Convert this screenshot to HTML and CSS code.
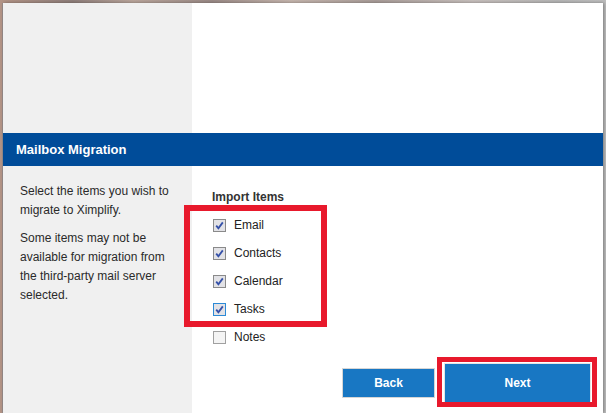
FILE: index.html
```html
<!DOCTYPE html>
<html>
<head>
<meta charset="utf-8">
<link rel="stylesheet" href="styles.css">
</head>
<body>
<div class="dialog">
  <div class="side-top"></div>
  <div class="main-top"></div>
  <div class="header">Mailbox Migration</div>
  <div class="side">
    <p>Select the items you wish to migrate to Ximplify.</p>
    <p>Some items may not be available for migration from the third-party mail server selected.</p>
  </div>
  <div class="main">
    <div class="heading">Import Items</div>
    <ul class="items">
      <li class="item"><span class="box checked"><svg viewBox="0 0 11 11" width="11" height="11"><path d="M2.2 5.6 L4.4 8.2 L8.8 2.4" /></svg></span>Email</li>
      <li class="item"><span class="box checked"><svg viewBox="0 0 11 11" width="11" height="11"><path d="M2.2 5.6 L4.4 8.2 L8.8 2.4" /></svg></span>Contacts</li>
      <li class="item"><span class="box checked"><svg viewBox="0 0 11 11" width="11" height="11"><path d="M2.2 5.6 L4.4 8.2 L8.8 2.4" /></svg></span>Calendar</li>
      <li class="item"><span class="box checked focus"><svg viewBox="0 0 11 11" width="11" height="11"><path d="M2.2 5.6 L4.4 8.2 L8.8 2.4" /></svg></span>Tasks</li>
      <li class="item"><span class="box"></span>Notes</li>
    </ul>
    <div class="actions">
      <button class="btn back">Back</button>
      <button class="btn next">Next</button>
    </div>
  </div>
  <div class="mark mark-items"></div>
  <div class="mark mark-next"></div>
</div>
</body>
</html>
```

FILE: styles.css
```css
html, body {
  margin: 0;
  padding: 0;
  width: 606px;
  height: 413px;
  overflow: hidden;
}
body {
  font-family: "Liberation Sans", Arial, sans-serif;
  background:
    linear-gradient(to right, #b39486 0%, #8e7e7a 12%, #b8a49a 22%, #9a8a86 35%, #c4b4ac 48%, #a89c98 62%, #c6bebb 78%, #b4b4b4 92%, #bdbdbd 100%);
}
.dialog {
  position: relative;
  margin: 3px 3px 0 3px;
  width: 600px;
  height: 410px;
  display: grid;
  grid-template-columns: 189px 1fr;
  grid-template-rows: 130px 33px 1fr;
  background: #fff;
  box-shadow: 1px 0 3px rgba(0, 0, 0, 0.35), -1px 0 0 #9a8e8c;
}
.side-top {
  background: #f0f0f0;
}
.main-top {
  background: #fff;
}
.header {
  grid-column: 1 / 3;
  background: #004c99;
  color: #fff;
  font-weight: bold;
  font-size: 13px;
  line-height: 33px;
  padding-left: 13px;
}
.side {
  background: #f0f0f0;
  padding: 16px 12px 0 17px;
  font-size: 12px;
  line-height: 19px;
  color: #2a2a2a;
}
.side p {
  margin: 0 0 9px 0;
}
.main {
  display: flex;
  flex-direction: column;
  padding: 23px 0 0 20px;
}
.heading {
  font-size: 12px;
  font-weight: bold;
  line-height: 16px;
  color: #333;
  margin-bottom: 6px;
}
.items {
  list-style: none;
  margin: 0;
  padding: 0 0 0 1px;
}
.item {
  height: 28px;
  display: flex;
  align-items: center;
  gap: 8px;
  font-size: 12px;
  color: #222;
}
.box {
  box-sizing: border-box;
  width: 13px;
  height: 13px;
  border: 1px solid #a0a0a0;
  background: #f4f4f4;
  display: flex;
  align-items: center;
  justify-content: center;
}
.box.checked {
  border-color: #8a8a8a;
  background: #e2e2e6;
}
.box.focus {
  border-color: #2c8ad6;
}
.box svg path {
  fill: none;
  stroke: #3450a8;
  stroke-width: 1.8;
}
.actions {
  margin-top: auto;
  display: flex;
  justify-content: flex-end;
  align-items: center;
  gap: 9px;
  padding: 0 12px 10px 0;
}
.btn {
  box-sizing: border-box;
  font-family: "Liberation Sans", Arial, sans-serif;
  font-weight: bold;
  font-size: 12px;
  color: #fff;
  background: #1877c3;
  border: 1px solid #d6d6d6;
  padding: 0;
}
.back {
  width: 93px;
  height: 30px;
}
.next {
  width: 147px;
  height: 40px;
  border-color: #e4e4e4;
}
.mark {
  position: absolute;
  box-sizing: border-box;
  border: 6px solid #e8192c;
}
.mark-items {
  left: 181px;
  top: 202px;
  width: 143px;
  height: 122px;
}
.mark-next {
  left: 434px;
  top: 354px;
  width: 160px;
  height: 50px;
  border-width: 5px;
}
```
